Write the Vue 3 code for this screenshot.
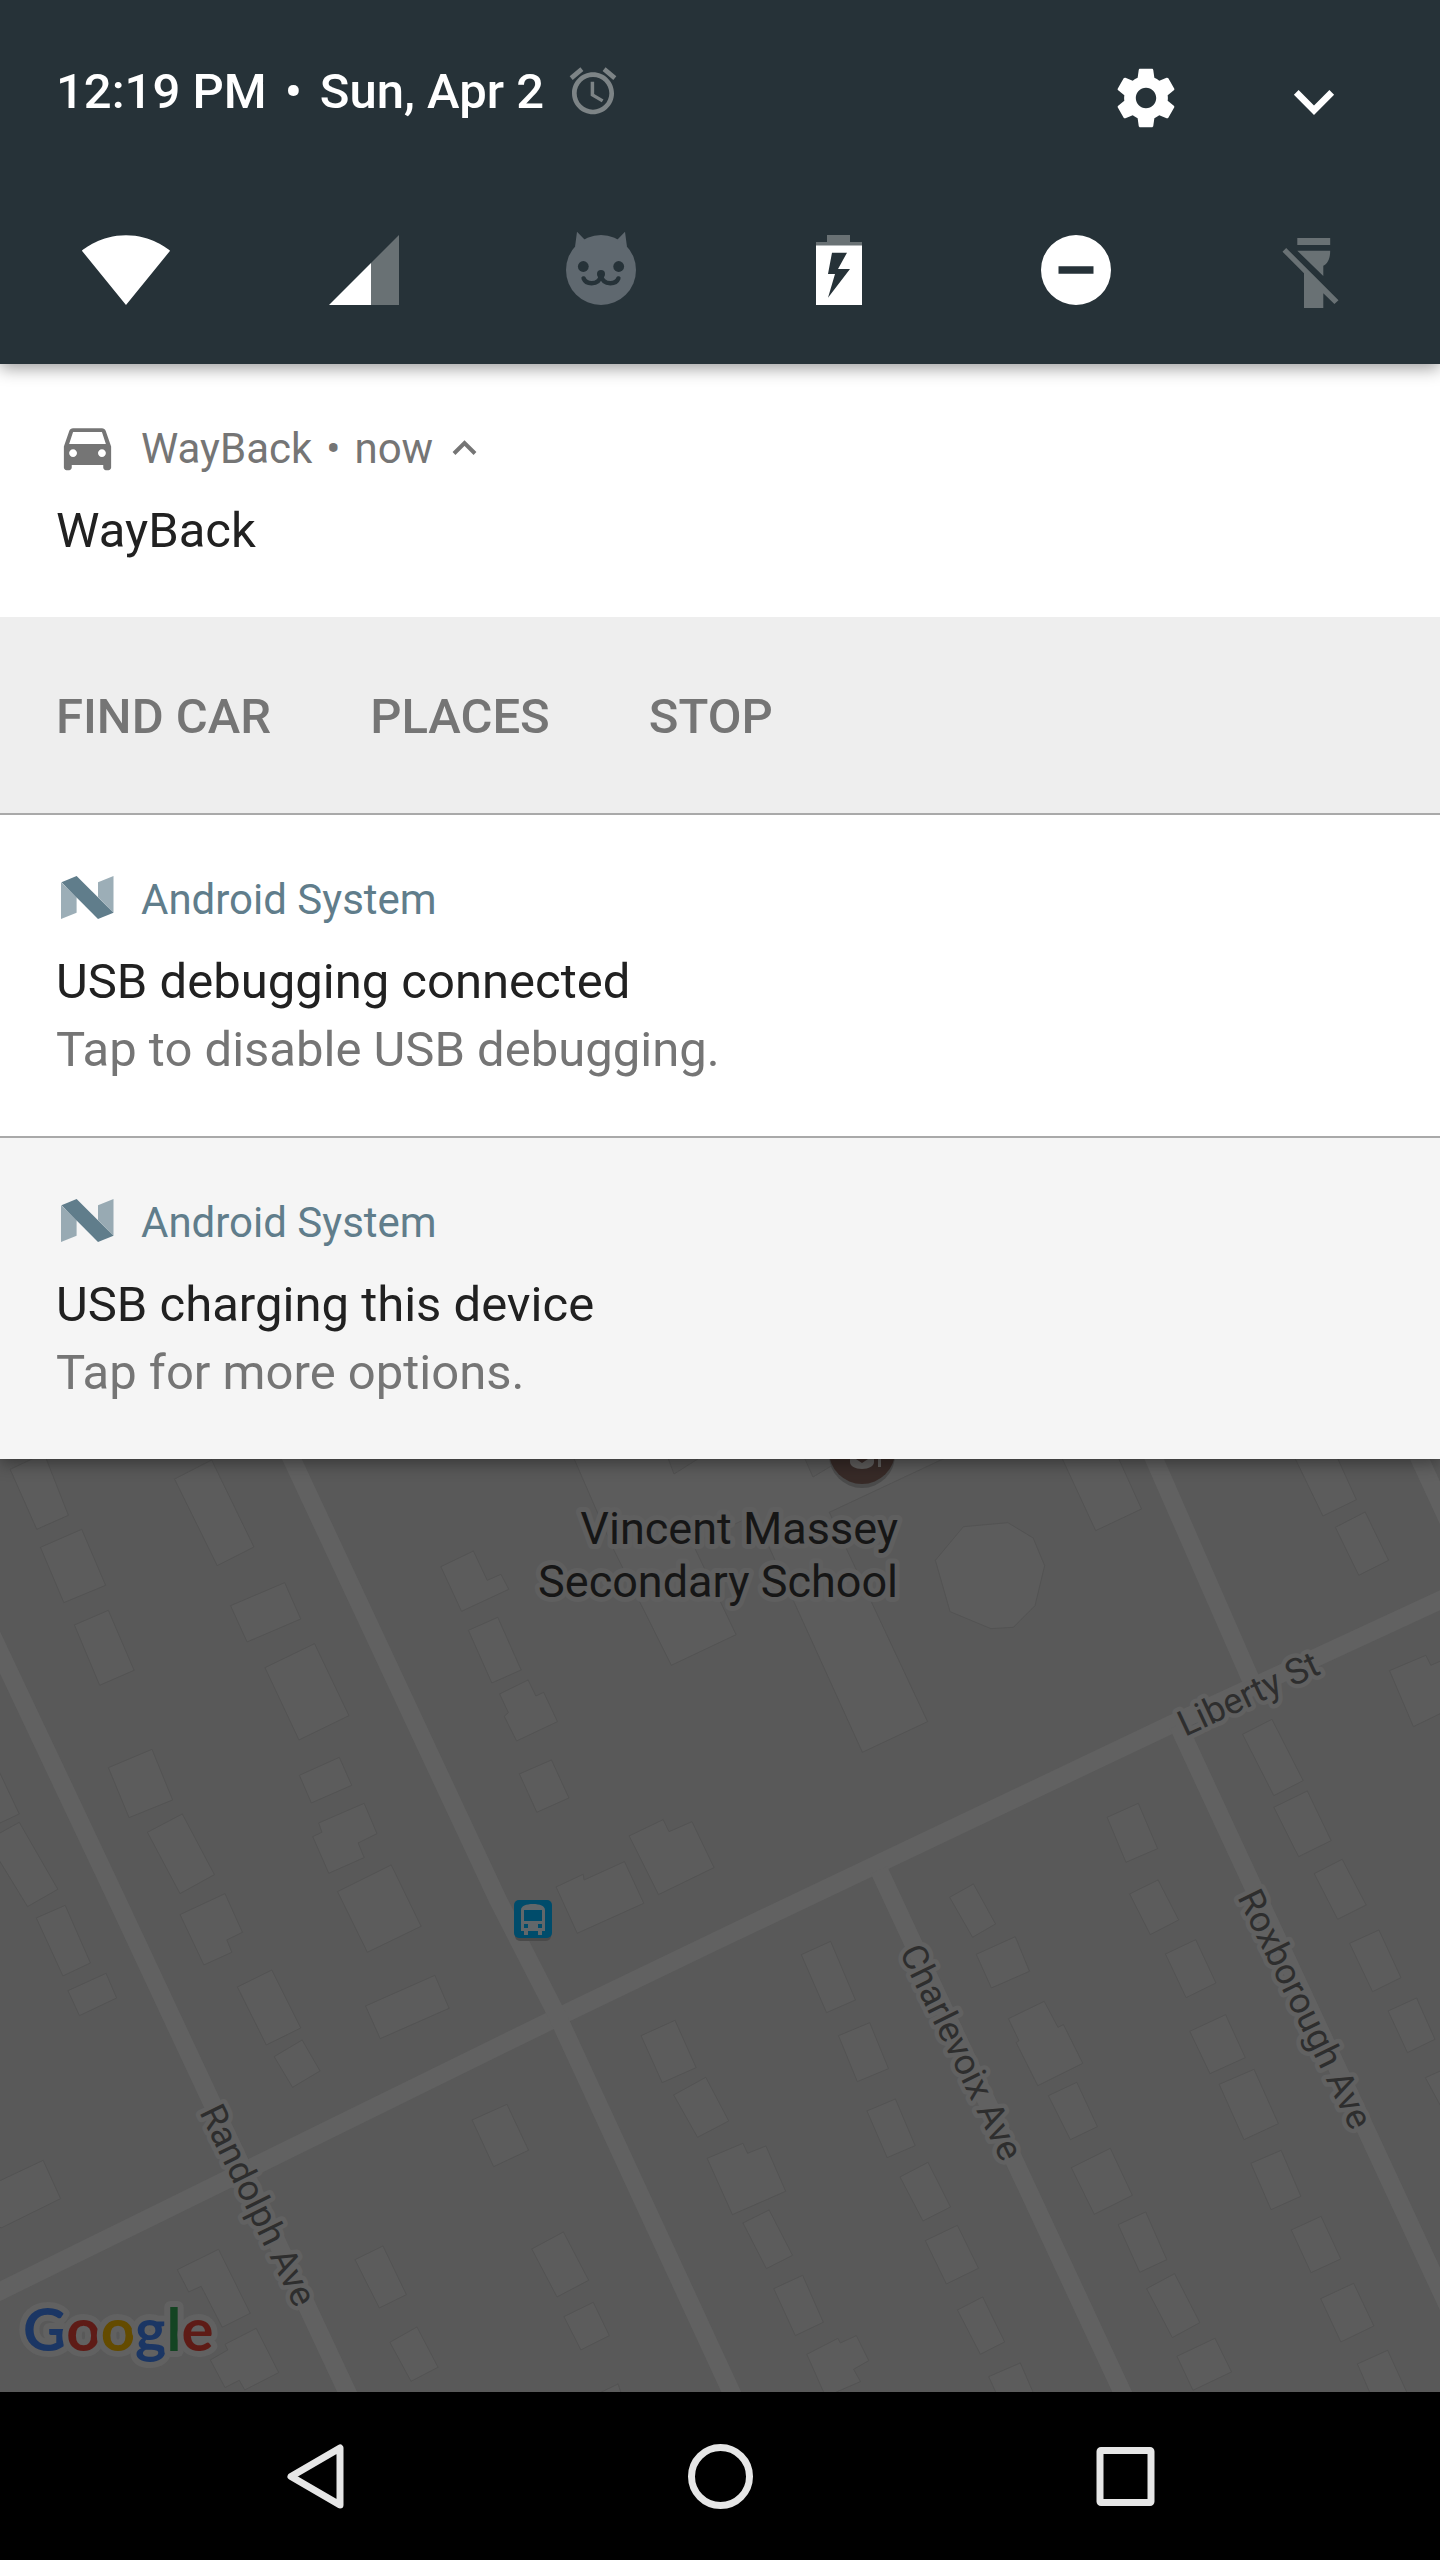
<script setup>
import { ref } from 'vue';

const time = ref('12:19 PM');
const date = ref('Sun, Apr 2');

const actions = ref(['Find car', 'Places', 'Stop']);

const systemNotes = ref([
    { id: 1, title: 'USB debugging connected', text: 'Tap to disable USB debugging.', dimmed: false },
    { id: 2, title: 'USB charging this device', text: 'Tap for more options.', dimmed: true }
]);

const roads = [
    '-20,2301 558,2017 720,1939 1170,1725 1460,1591',
    '-13,1625 117,1900 357,2413',
    '282,1438 498,1900 558,2017 741,2413',
    '1145,1438 1251,1680',
    '1178,1725 1460,2332',
    '879,1870 1132,2413',
    '1410,1438 1460,1546'
];

// building outlines, every tile has its own units
const tiles = [
    {
        id: 'nw',
        place: 'translate(0 1440) scale(.4592 .3333)',
        buildings: [
            '22,88 96,40 149,226 80,268',
            '380,117 461,60 553,321 473,377',
            '88,322 178,268 230,436 139,488',
            '162,555 236,511 292,691 217,736',
            '502,497 620,428 655,537 538,606',
            '577,683 685,611 760,827 651,900',
            '960,380 1031,333 1061,421 1091,403 1108,448 1005,514',
            '1020,571 1084,532 1135,690 1071,729',
            '1088,762 1150,720 1167,768 1184,757 1214,845 1125,903 1098,829 1107,818',
            '236,983 331,928 376,1080 281,1133',
            '652,1006 739,952 766,1036 678,1089',
            '321,1177 397,1122 467,1304 392,1361',
            '694,1149 793,1090 821,1181 780,1209 793,1253 716,1300 681,1190 701,1177',
            '735,1355 852,1275 917,1459 800,1537',
            '1131,1002 1201,960 1239,1074 1169,1117',
            '1370,1188 1444,1139 1457,1175 1507,1145 1555,1283 1434,1364',
            '1211,1341 1270,1303 1272,1320 1360,1265 1402,1390 1257,1480',
            '-30,930 0,1000 42,1122 -20,1162',
            '-20,1194 42,1147 126,1348 60,1400 -20,1220',
            '79,1434 142,1396 197,1569 137,1608',
            '392,1424 490,1361 528,1477 494,1500 505,1537 444,1575',
            '1245,40 1335,325 1462,676 1603,584 1508,310 1643,225 1878,937 2020,845 1806,217 2080,40'
        ]
    },
    {
        id: 'ne',
        place: 'translate(720 1440) scale(.4592 .3333)',
        buildings: [
            '740,40 818,272 918,207 863,40',
            '1247,40 1313,228 1386,179 1340,40',
            '1340,262 1405,216 1456,361 1391,406',
            '530,260 627,248 682,294 707,377 686,497 639,562 590,566 501,515 469,361',
            '1458,692 1537,646 1548,676 1600,645 1600,800 1510,860',
            '1138,883 1202,838 1270,1022 1206,1067',
            '1206,1102 1279,1053 1331,1202 1260,1250',
            '1294,1301 1355,1258 1407,1395 1345,1438',
            '843,1132 911,1090 953,1226 884,1267',
            '500,1372 552,1332 600,1452 550,1492',
            '892,1362 954,1320 999,1440 937,1484'
        ]
    },
    {
        id: 'sw',
        place: 'translate(0 1900) scale(.4592 .3333)',
        buildings: [
            '148,272 231,220 254,294 173,347',
            '517,261 592,210 655,384 580,435',
            '597,470 658,420 697,513 637,562',
            '796,318 947,226 978,325 828,416',
            '1396,407 1470,361 1516,503 1442,548',
            '1467,585 1537,532 1587,663 1519,712',
            '1028,660 1104,613 1151,751 1075,800',
            '-20,855 94,781 132,896 4,983 -20,980',
            '773,1079 834,1038 885,1184 826,1224',
            '849,1327 908,1281 954,1402 895,1444',
            '1158,1047 1227,996 1282,1141 1213,1191',
            '1228,1250 1292,1207 1327,1307 1265,1350',
            '1310,1476 1346,1452 1355,1490',
            '386,1109 476,1048 545,1240 484,1282 438,1159 411,1176',
            '458,1380 496,1350 490,1333 558,1285 607,1418 533,1470 521,1441 490,1463'
        ]
    },
    {
        id: 'se',
        place: 'translate(720 1900) scale(.4592 .3333)',
        buildings: [
            '177,164 241,124 295,300 232,338',
            '558,163 643,110 674,214 591,264',
            '258,407 326,368 367,506 299,545',
            '970,162 1036,119 1080,249 1015,293',
            '1371,130 1435,90 1483,233 1421,275',
            '1455,333 1517,294 1557,418 1497,458',
            '628,356 706,304 736,382 748,374 790,490 692,557 645,428 651,422',
            '1023,394 1101,344 1144,473 1067,521',
            '320,633 382,597 425,737 364,773',
            '715,587 777,547 822,680 763,719',
            '1087,553 1163,508 1216,671 1141,719',
            '392,831 453,787 502,921 442,963',
            '765,803 850,745 898,886 815,943',
            '1156,790 1222,751 1265,889 1200,929',
            '1536,533 1600,494 1600,680 1568,615',
            '-28,775 50,730 60,760 100,738 143,874 27,944',
            '50,969 107,930 158,1066 101,1106',
            '117,1166 180,1126 225,1267 164,1307',
            '189,1363 257,1315 262,1329 297,1307 324,1382 291,1408 306,1445 230,1490',
            '447,1022 517,976 563,1105 493,1152',
            '517,1230 572,1191 620,1326 567,1363',
            '867,974 927,936 973,1079 914,1117',
            '929,1166 990,1121 1045,1268 985,1313',
            '995,1369 1078,1315 1114,1416 1030,1471',
            '1244,990 1309,949 1352,1077 1287,1118',
            '1308,1196 1380,1150 1424,1278 1352,1326',
            '1388,1392 1454,1351 1500,1490 1419,1490',
            '585,1430 654,1389 686,1490 605,1490'
        ]
    }
];

const streets = [
    { name: 'Liberty St', place: 'translate(1185 1737) rotate(-25)' },
    { name: 'Randolph Ave', place: 'translate(199 2112) rotate(64)' },
    { name: 'Charlevoix Ave', place: 'translate(899 1952) rotate(64)' },
    { name: 'Roxborough Ave', place: 'translate(1237 1897) rotate(64)' }
];
</script>

<template>
<div class="phone">
    <header class="shade">
        <div class="status">
            <span>{{ time }}</span>
            <span>•</span>
            <span>{{ date }}</span>
            <svg class="alarm" viewBox="0 0 24 24" aria-hidden="true">
                <path d="M22 5.72l-4.6-3.86-1.29 1.53 4.6 3.86L22 5.72zM7.88 3.39L6.6 1.86 2 5.71l1.29 1.53 4.59-3.85zM12.5 8H11v6l4.75 2.85.75-1.23-4-2.37V8zM12 4c-4.97 0-9 4.03-9 9s4.02 9 9 9c4.97 0 9-4.03 9-9s-4.03-9-9-9zm0 16c-3.87 0-7-3.13-7-7s3.13-7 7-7 7 3.13 7 7-3.13 7-7 7z" />
            </svg>
            <div class="status-buttons">
                <button class="icon-btn" aria-label="Settings">
                    <svg class="icon-70" viewBox="0 0 24 24">
                        <path d="M19.43 12.98c.04-.32.07-.64.07-.98s-.03-.66-.07-.98l2.11-1.65c.19-.15.24-.42.12-.64l-2-3.46c-.12-.22-.39-.3-.61-.22l-2.49 1c-.52-.4-1.08-.73-1.69-.98l-.38-2.65C14.46 2.18 14.25 2 14 2h-4c-.25 0-.46.18-.49.42l-.38 2.65c-.61.25-1.17.59-1.69.98l-2.49-1c-.23-.09-.49 0-.61.22l-2 3.46c-.13.22-.07.49.12.64l2.11 1.65c-.04.32-.07.65-.07.98s.03.66.07.98l-2.11 1.65c-.19.15-.24.42-.12.64l2 3.46c.12.22.39.3.61.22l2.49-1c.52.4 1.08.73 1.69.98l.38 2.65c.03.24.24.42.49.42h4c.25 0 .46-.18.49-.42l.38-2.65c.61-.25 1.17-.59 1.69-.98l2.49 1c.23.09.49 0 .61-.22l2-3.46c.12-.22.07-.49-.12-.64l-2.11-1.65zM12 15.5c-1.93 0-3.5-1.57-3.5-3.5s1.57-3.5 3.5-3.5 3.5 1.57 3.5 3.5-1.57 3.5-3.5 3.5z" />
                    </svg>
                </button>
                <button class="icon-btn" aria-label="Expand">
                    <svg class="icon-70" viewBox="0 0 70 70">
                        <path d="M19.6 27L35 42.4 50.4 27l4.7 4.7L35 52 14.9 31.7z" />
                    </svg>
                </button>
            </div>
        </div>

        <div class="tiles">
            <button class="icon-btn" aria-label="Wi-Fi">
                <svg class="icon-84" viewBox="1 0 24 24">
                    <path d="M13 22L25.6 6.5C25.1 6.1 20.3 2.1 13 2.1S.9 6.1.4 6.5L13 22z" />
                </svg>
            </button>
            <button class="icon-btn" aria-label="Mobile data">
                <svg class="icon-84" viewBox="0 0 24 24">
                    <path class="faded" d="M14 10l8-8v20h-8z" />
                    <path d="M14 22H2l12-12z" />
                </svg>
            </button>
            <button class="icon-btn" aria-label="Cat">
                <svg class="icon-84 cat" viewBox="0 0 84 84">
                    <path d="M16 19L18 3.7 26 12zM68 19L66 3.7 58 12z" />
                    <circle cx="42" cy="42" r="35" />
                    <circle class="hole" cx="24.3" cy="38.5" r="5.4" />
                    <circle class="hole" cx="59.7" cy="38.5" r="5.4" />
                    <circle class="hole" cx="42" cy="46" r="4" />
                    <path class="mouth" d="M24.6 50.4C26 54 29 55.2 32.6 55.2 37.5 55.2 41 53 42 47 43 53 46.5 55.2 51.4 55.2 55 55.2 58 54 59.4 50.4" />
                </svg>
            </button>
            <button class="icon-btn" aria-label="Battery">
                <svg class="icon-84" viewBox="0 0 84 84">
                    <path class="faded" d="M19 14H30V7H53V14H65V18H19z" />
                    <path fill-rule="evenodd" d="M19 17.5H65V77H19zM35 24.7L31 46H38L31 69.7 53 41H41L50 24.7z" />
                </svg>
            </button>
            <button class="icon-btn" aria-label="Do not disturb">
                <svg class="icon-84" viewBox="0 0 84 84">
                    <path fill-rule="evenodd" d="M42 7a35 35 0 1 0 0 70a35 35 0 1 0 0-70zM24.5 38.3H59.5V45.7H24.5z" />
                </svg>
            </button>
            <button class="icon-btn" aria-label="Flashlight">
                <svg class="icon-84 flashlight" viewBox="0 0 84 84">
                    <path d="M25.3 10H58.2V17H25.3zM25.3 22.7H58.2C58.2 30 56 35.5 51.3 37.7V48zM14.2 20L66.5 72.3 62.4 76 51.3 65.3V80H32V45.3L10.5 23.7z" />
                </svg>
            </button>
        </div>
    </header>

    <main class="list">
        <article class="note">
            <div class="note-body">
                <div class="note-head">
                    <svg class="icon-63" viewBox="0 0 24 24" aria-hidden="true">
                        <path d="M18.92 6.01c-.2-.59-.76-1.01-1.42-1.01h-11c-.66 0-1.21.42-1.42 1.01L3 12v8c0 .55.45 1 1 1h1c.55 0 1-.45 1-1v-1h12v1c0 .55.45 1 1 1h1c.55 0 1-.45 1-1v-8l-2.08-5.99zM6.5 16c-.83 0-1.5-.67-1.5-1.5S5.67 13 6.5 13s1.5.67 1.5 1.5S7.33 16 6.5 16zm11 0c-.83 0-1.5-.67-1.5-1.5s.67-1.5 1.5-1.5 1.5.67 1.5 1.5-.67 1.5-1.5 1.5zM5 11l1.5-4.5h11L19 11H5z" />
                    </svg>
                    <span class="app-name">WayBack</span>
                    <span>•</span>
                    <span>now</span>
                    <button class="icon-btn collapse" aria-label="Collapse">
                        <svg class="icon-63" viewBox="0 0 63 63">
                            <path d="M21 38.5L31.5 28 42 38.5" />
                        </svg>
                    </button>
                </div>
                <h2 class="note-title">WayBack</h2>
            </div>
            <div class="actions">
                <button v-for="action in actions" :key="action" class="action-btn">{{ action }}</button>
            </div>
        </article>

        <article v-for="note in systemNotes" :key="note.id" class="note" :class="{ dimmed: note.dimmed }">
            <div class="note-body">
                <div class="note-head system">
                    <svg class="icon-63" viewBox="0 0 63 63" aria-hidden="true">
                        <path class="fold" d="M5 16.3L20.6 31V46.7L5 53zM42 16.3L57.5 10V46.7L42 31z" />
                        <path d="M5.5 16.3L20.6 10 57.5 46.7 42 53z" />
                    </svg>
                    <span class="app-name">Android System</span>
                </div>
                <h2 class="note-title">{{ note.title }}</h2>
                <p class="note-text">{{ note.text }}</p>
            </div>
        </article>
    </main>

    <section class="map-area">
        <svg class="map" viewBox="0 1459 1440 933" preserveAspectRatio="xMidYMid slice">
            <g v-for="tile in tiles" :key="tile.id" :transform="tile.place">
                <polygon v-for="shape in tile.buildings" :key="shape" class="building" :points="shape" />
            </g>
            <polygon class="yard" points="665,1450 674,1474 712,1450" />
            <polygon class="yard" points="801,1450 813,1477 858,1450" />

            <polyline v-for="road in roads" :key="road" class="road" :points="road" />

            <!-- school pin -->
            <circle class="pin-shadow" cx="862" cy="1455" r="33" />
            <circle class="pin" cx="862" cy="1451" r="33" />
            <path class="pin-cap" d="M850 1455L862 1463 874 1455V1462C874 1466 869 1469 862 1469S850 1466 850 1462zM878 1452H881V1467H878z" />

            <text class="place" x="898" y="1544">Vincent Massey</text>
            <text class="place" x="898" y="1597">Secondary School</text>

            <text v-for="street in streets" :key="street.name" class="street" :transform="street.place">{{ street.name }}</text>

            <!-- bus stop -->
            <rect class="pin-shadow" x="515" y="1903" width="36" height="38" rx="5" />
            <rect class="stop" x="514" y="1900" width="38" height="38" rx="5" />
            <path class="bus" fill-rule="evenodd" d="M521 1910C521 1906 526 1904 533 1904S545 1906 545 1910V1931H542V1935H538V1931H528V1935H524V1931H521zM524 1910V1921H542V1910zM524 1924V1928H528V1924zM538 1924V1928H542V1924z" />

            <text class="google" x="23" y="2351"><tspan class="blue">G</tspan><tspan class="red">o</tspan><tspan class="yellow">o</tspan><tspan class="blue">g</tspan><tspan class="green">l</tspan><tspan class="red">e</tspan></text>
        </svg>
    </section>

    <nav class="nav-bar">
        <button class="icon-btn nav-btn" aria-label="Back">
            <svg class="icon-84" viewBox="0 0 84 84"><path d="M67 14V71L18 42.5z" /></svg>
        </button>
        <button class="icon-btn nav-btn" aria-label="Home">
            <svg class="icon-84" viewBox="0 0 84 84"><circle cx="42.5" cy="42.5" r="29" /></svg>
        </button>
        <button class="icon-btn nav-btn" aria-label="Recent apps">
            <svg class="icon-84" viewBox="0 0 84 84"><rect x="17" y="16.5" width="51" height="52" rx="1" /></svg>
        </button>
    </nav>
</div>
</template>

<style>
body{
    margin: 0;
    background-color: black;
}
</style>

<style scoped>
.phone{
    display: flex;
    flex-direction: column;
    min-height: 100vh;
    font-family: Roboto, sans-serif;
}

svg{
    display: block;
    overflow: visible;
}
.icon-63{
    width: 63px;
    height: 63px;
    fill: currentColor;
}
.icon-70{
    width: 70px;
    height: 70px;
    fill: currentColor;
}
.icon-84{
    width: 84px;
    height: 84px;
    fill: currentColor;
}
.icon-btn{
    border: 0;
    padding: 0;
    background-color: transparent;
    color: inherit;
    cursor: pointer;
}

/* quick settings */
.shade{
    position: relative;
    z-index: 1;
    padding: 63px 0 52px;
    background-color: #263238;
    color: white;
    box-shadow: 0 4px 16px rgba(0, 0, 0, 0.4);
}
.status{
    display: flex;
    align-items: flex-start;
    gap: 18px;
    padding: 0 91px 0 56px;
    font-size: 49px;
    line-height: 58px;
    font-weight: 500;
}
.alarm{
    width: 56px;
    height: 56px;
    margin-left: 3px;
    fill: #7d8486;
}
.status-buttons{
    display: flex;
    gap: 98px;
    margin-left: auto;
}
.tiles{
    display: flex;
    justify-content: space-between;
    padding: 0 84px;
    margin-top: 95px;
}
.faded{
    fill: #697174;
}
.cat{
    fill: #5f686f;
}
.hole{
    fill: #263238;
}
.mouth{
    fill: none;
    stroke: #263238;
    stroke-width: 4.4;
    stroke-linecap: round;
}
.flashlight{
    fill: #697174;
}

/* notifications */
.list{
    position: relative;
    box-shadow: 0 4px 16px rgba(0, 0, 0, 0.4);
}
.note{
    background-color: white;
}
.note + .note{
    border-top: 2px solid #a9a9a9;
}
.dimmed{
    background-color: #f5f5f5;
}
.note-body{
    padding: 51px 56px 52px;
}
.note-head{
    display: flex;
    align-items: flex-start;
    gap: 14px;
    color: #757575;
    font-size: 42px;
    line-height: 67px;
}
.system{
    color: #607d8b;
}
.fold{
    opacity: 0.62;
}
.app-name{
    margin-left: 8px;
}
.collapse{
    margin-left: -14px;
}
.collapse path{
    fill: none;
    stroke: #757575;
    stroke-width: 4;
}
.note-title{
    margin: 15px 0 0;
    color: #212121;
    font-size: 49px;
    line-height: 68px;
    font-weight: 400;
}
.note-text{
    margin: 0;
    color: #757575;
    font-size: 49px;
    line-height: 68px;
}
.actions{
    display: flex;
    gap: 99px;
    padding: 4px 56px 0;
    background-color: #eeeeee;
}
.action-btn{
    border: 0;
    padding: 0;
    background-color: transparent;
    color: #757575;
    font-family: inherit;
    font-size: 49px;
    line-height: 192px;
    font-weight: 500;
    text-transform: uppercase;
    cursor: pointer;
}

/* map */
.map-area{
    display: flex;
    flex: 1;
    min-height: 400px;
    background-color: #595959;
}
.map{
    width: 100%;
    overflow: hidden;
}
.building{
    fill: #5c5c5c;
    stroke: #535353;
    stroke-width: 1;
    vector-effect: non-scaling-stroke;
}
.yard{
    fill: #595959;
    stroke: #535353;
}
.road{
    fill: none;
    stroke: #616161;
    stroke-width: 18;
    stroke-linejoin: round;
}
.place{
    fill: #161616;
    stroke: #5f5f5f;
    stroke-width: 10;
    stroke-linejoin: round;
    paint-order: stroke;
    font-size: 45px;
    text-anchor: end;
}
.street{
    fill: #2e2e2e;
    stroke: #616161;
    stroke-width: 9;
    stroke-linejoin: round;
    paint-order: stroke;
    font-size: 36px;
}
.pin{
    fill: #372a27;
}
.pin-shadow{
    fill: #4a4a4a;
}
.pin-cap{
    fill: #5f5d5c;
}
.stop{
    fill: #004c6b;
}
.bus{
    fill: #62676a;
}
.google{
    stroke: #616161;
    stroke-width: 12;
    stroke-linejoin: round;
    paint-order: stroke;
    font-family: Lato, sans-serif;
    font-size: 60px;
    font-weight: 700;
}
.blue{
    fill: #1b3664;
}
.red{
    fill: #5e1b16;
}
.yellow{
    fill: #644b00;
}
.green{
    fill: #144422;
}

/* system buttons */
.nav-bar{
    display: flex;
    padding: 42px 112px;
    background-color: black;
    color: #e6e6e6;
}
.nav-btn{
    display: flex;
    flex: 1;
    justify-content: center;
}
.nav-btn svg{
    fill: none;
    stroke: currentColor;
    stroke-width: 7;
    stroke-linejoin: round;
}
</style>
